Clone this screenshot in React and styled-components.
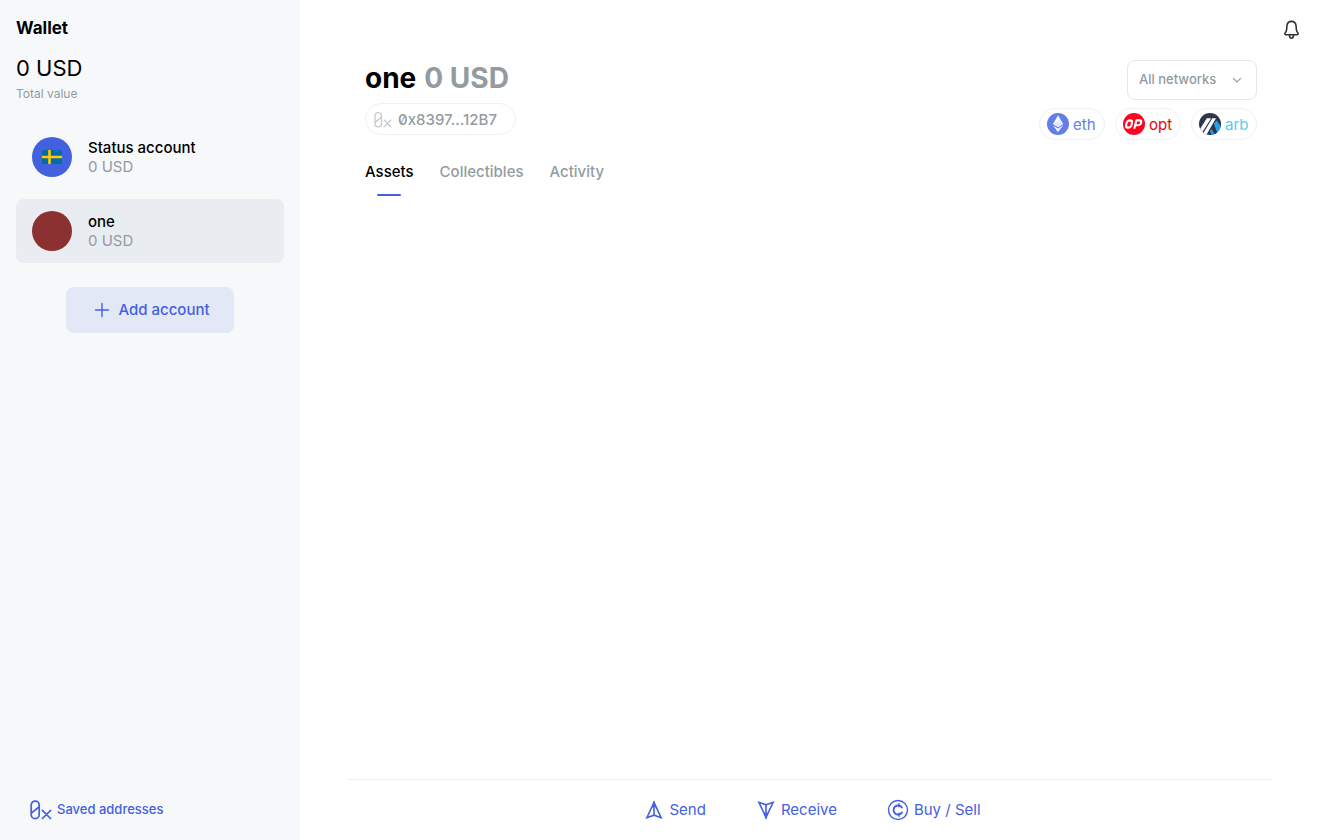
import React from 'react';
import styled, { createGlobalStyle } from 'styled-components';

const colors = {
  primary: '#4360df',
  muted: '#939ba1',
  line: '#eef2f5',
  sidebar: '#f6f8fa',
  selected: '#e9edf1',
};

const GlobalStyle = createGlobalStyle`
  * { box-sizing: border-box; }
  body { margin: 0; background: #fff; color: #000; font-family: Inter, sans-serif; font-size: 15px; line-height: 24px; }
  h1, h2, p, ul { margin: 0; padding: 0; }
  ul { list-style: none; }
  button, select { font: inherit; color: inherit; border: 0; background: none; padding: 0; cursor: pointer; }
  svg { display: block; flex: none; }
`;

const Page = styled.div`
  display: grid;
  grid-template-columns: 300px 1fr;
  min-height: 100vh;
`;

const Sidebar = styled.aside`
  display: flex;
  flex-direction: column;
  padding: 16px;
  background: ${colors.sidebar};
`;

const SidebarTitle = styled.h2`
  font-size: 17px;
  font-weight: 700;
  line-height: 24px;
`;

const Total = styled.p`
  margin-top: 12px;
  font-size: 22px;
  line-height: 32px;
`;

const TotalLabel = styled.p`
  color: ${colors.muted};
  font-size: 12px;
  line-height: 20px;
`;

const AccountList = styled.ul`
  display: flex;
  flex-direction: column;
  gap: 10px;
  margin-top: 21px;
`;

const AccountRow = styled.button`
  display: flex;
  align-items: center;
  gap: 16px;
  width: 100%;
  height: 64px;
  padding: 0 16px;
  border-radius: 8px;
  text-align: left;
  background: ${(p) => (p.$selected ? colors.selected : 'transparent')};
`;

const Avatar = styled.span`
  display: grid;
  place-items: center;
  width: 40px;
  height: 40px;
  border-radius: 50%;
  background: ${(p) => p.$color};
`;

const AccountText = styled.span`
  display: flex;
  flex-direction: column;
  line-height: 19px;
`;

const AccountName = styled.span`
  font-weight: 500;
`;

const AccountBalance = styled.span`
  color: ${colors.muted};
`;

const AddButton = styled.button`
  display: flex;
  align-items: center;
  align-self: center;
  gap: 8px;
  height: 46px;
  margin-top: 24px;
  padding: 0 24px 0 28px;
  border-radius: 8px;
  background: #e3e8f7;
  color: ${colors.primary};
  font-weight: 500;
`;

const SavedLink = styled.a`
  display: flex;
  align-items: center;
  gap: 5px;
  margin-top: auto;
  padding: 0 14px;
  color: ${colors.primary};
  font-size: 13px;
  font-weight: 500;
  line-height: 30px;
  text-decoration: none;
`;

const Main = styled.main`
  display: flex;
  flex-direction: column;
`;

const TopBar = styled.div`
  display: flex;
  justify-content: flex-end;
  height: 60px;
  padding: 18px 19px;
`;

const IconButton = styled.button`
  display: grid;
  place-items: center;
  width: 24px;
  height: 24px;
`;

const Header = styled.header`
  display: flex;
  justify-content: space-between;
  padding: 0 65px;
`;

const HeaderLeft = styled.div`
  display: flex;
  flex-direction: column;
  align-items: flex-start;
  gap: 7px;
`;

const HeaderRight = styled.div`
  display: flex;
  flex-direction: column;
  align-items: flex-end;
  gap: 8px;
`;

const Title = styled.h1`
  display: flex;
  gap: 8px;
  font-size: 28px;
  font-weight: 700;
  line-height: 36px;
`;

const TitleBalance = styled.span`
  color: ${colors.muted};
`;

const Pill = styled.button`
  display: flex;
  align-items: center;
  height: 32px;
  border: 1px solid ${colors.line};
  border-radius: 16px;
  line-height: normal;
`;

const AddressPill = styled(Pill)`
  gap: 6px;
  padding: 0 18px 0 8px;
  color: ${colors.muted};
  font-weight: 500;
  font-variant-numeric: slashed-zero;
`;

const NetworkList = styled.ul`
  display: flex;
  gap: 10px;
`;

const NetworkPill = styled(Pill)`
  gap: 4px;
  width: 66px;
  padding: 0 0 0 7px;
  color: ${(p) => p.$color};
`;

const SelectBox = styled.label`
  display: grid;
  grid-template-columns: 1fr 38px;
  align-items: center;
  width: 130px;
  height: 40px;
  border: 1px solid #e4e6e9;
  border-radius: 8px;
  color: ${colors.muted};

  svg { grid-area: 1 / 2; justify-self: center; pointer-events: none; }
`;

const Select = styled.select`
  grid-area: 1 / 1 / 2 / 3;
  height: 38px;
  padding: 0 32px 2px 11px;
  appearance: none;
  font-size: 13px;
  font-weight: 500;
`;

const Tabs = styled.nav`
  display: flex;
  gap: 26px;
  margin-top: 20px;
  padding: 0 65px;
`;

const Tab = styled.button`
  display: flex;
  flex-direction: column;
  align-items: center;
  gap: 10px;
  color: ${(p) => (p.$active ? '#000' : colors.muted)};
  font-weight: 500;

  &::after {
    content: '';
    width: 24px;
    height: 2px;
    border-radius: 1px;
    background: ${(p) => (p.$active ? colors.primary : 'transparent')};
  }
`;

const Footer = styled.footer`
  display: flex;
  justify-content: center;
  gap: 50px;
  height: 61px;
  margin: auto 50px 0 48px;
  padding-left: 5px;
  border-top: 1px solid #eceef0;
`;

const Action = styled.button`
  display: flex;
  align-items: center;
  gap: 5px;
  color: ${colors.primary};
`;

const Flag = () => (
  <svg width="20" height="14" viewBox="0 0 20 14">
    <rect width="20" height="14" rx="2" fill="#066aa7" />
    <path d="M7.5 0v14M0 7h20" stroke="#fecc00" strokeWidth="2.6" />
  </svg>
);

const Plus = () => (
  <svg width="16" height="16" viewBox="0 0 16 16" fill="none" stroke="currentColor" strokeWidth="1.4" strokeLinecap="round">
    <path d="M8 1.5v13M1.5 8h13" />
  </svg>
);

const HexIcon = ({ size, color }) => (
  <svg width={size} height={size} viewBox="0 -2 22 22" fill="none" stroke={color} strokeWidth="1.7" strokeLinecap="round">
    <rect x="1.2" y="1.2" width="8" height="17.4" rx="3.8" />
    <path d="M1.6 12.8 9 7M12.4 10.3l8.2 8.2M20.6 10.3l-8.2 8.2" />
  </svg>
);

const Bell = () => (
  <svg width="24" height="24" viewBox="0 0 24 24" fill="none" stroke="#303237" strokeWidth="1.6" strokeLinejoin="round">
    <path d="M12.5 3.4c-3 0-4.400 2.200-4.600 4.800l-.3 3.600c-.1 1.400-.5 2.100-1.300 3-.9 1-.6 1.900.6 1.900h11.200c1.200 0 1.500-.9.6-1.900-.8-.9-1.200-1.600-1.300-3l-.3-3.600c-.2-2.600-1.600-4.800-4.600-4.800Z" />
    <path d="M10.500 17c0 2 .8 3.200 2 3.200s2-1.200 2-3.200" />
  </svg>
);

const Chevron = () => (
  <svg width="10" height="10" viewBox="0 0 10 10" fill="none" stroke="#939ba1" strokeWidth="1.1" strokeLinecap="round" strokeLinejoin="round">
    <path d="m1.5 3.5 3.500 3.300 3.500-3.300" />
  </svg>
);

const EthIcon = () => (
  <svg width="22" height="22" viewBox="0 0 22 22">
    <circle cx="11" cy="11" r="11" fill="#627eea" />
    <path d="m11 2.600-5 8.500 5 3 5-3Z" fill="#fff" />
    <path d="m11 2.600 5 8.500-5 3Z" fill="#f0f3fe" />
    <path d="m11 8.700-5 2.400 5 3 5-3Z" fill="#dfe5fb" />
    <path d="m6 12.500 5 6.600 5-6.600-5 3Z" fill="#fff" />
    <path d="m11 15.500v3.600l5-6.600Z" fill="#dfe5fb" />
  </svg>
);

const OpIcon = () => (
  <svg width="22" height="22" viewBox="0 0 22 22">
    <circle cx="11" cy="11" r="11" fill="#ff0420" />
    <g transform="translate(2.600 0) skewX(-14)" fill="none" stroke="#fff" strokeWidth="2.100" strokeLinejoin="round">
      <rect x="3.500" y="7.400" width="5.400" height="7.200" rx="2.700" />
      <path d="M12.600 15.700V7.400h3a2.300 2.300 0 0 1 0 4.800h-3" />
    </g>
  </svg>
);

const ArbIcon = () => (
  <svg width="22" height="22" viewBox="0 0 22 22">
    <defs>
      <clipPath id="arb-disc"><circle cx="11" cy="11" r="11" /></clipPath>
    </defs>
    <g clipPath="url(#arb-disc)">
      <rect width="22" height="22" fill="#2d374b" />
      <path d="m14.800 10.600 3-3.200 5 7.600v8h-3.500Z" fill="#28a0f0" />
      <path d="m14.200 12.400 5 8.600-3 1-3.700-6.300Z" fill="#2d374b" />
      <path d="m12.300 15.800 3.900 6.700h-3l-2.300-4.200Z" fill="#28a0f0" />
      <path d="M7.800 5.200h4.300L2.200 21H-2Z" fill="#fff" />
      <path d="M13.300 5.200h3.700L7 22.500H2.900Z" fill="#fff" />
    </g>
  </svg>
);

const SendIcon = ({ flipped }) => (
  <svg width="20" height="22" viewBox="0 0 20 22" fill="none" stroke="currentColor" strokeWidth="1.600" strokeLinejoin="miter" strokeLinecap="round">
    <g transform={flipped ? 'rotate(180 10 11)' : undefined}>
      <path d="M10 3.500 2.900 18.700 10 16.200l7.100 2.500Z" />
      <path d="M10 3v13" />
      <path d="m10 2-2.300 7 2.300-1.500L12.300 9Z" fill="currentColor" stroke="none" />
    </g>
  </svg>
);

const CoinIcon = () => (
  <svg width="22" height="22" viewBox="0 0 22 22" fill="none" stroke="currentColor" strokeWidth="1.400" strokeLinecap="round">
    <circle cx="11" cy="11" r="9.500" />
    <path d="M14.900 8.600a4.500 4.500 0 1 0 0 4.800" strokeWidth="1.900" />
    <path d="M12 4.800v3M12 14.200v3" />
  </svg>
);

const accounts = [
  { name: 'Status account', balance: '0 USD', color: colors.primary, icon: <Flag /> },
  { name: 'one', balance: '0 USD', color: '#8b3131', selected: true },
];

const networks = [
  { name: 'eth', color: '#627eea', icon: <EthIcon /> },
  { name: 'opt', color: '#e90101', icon: <OpIcon /> },
  { name: 'arb', color: '#51d0f0', icon: <ArbIcon /> },
];

export default function App() {
  return (
    <>
      <GlobalStyle />
      <Page>
        <Sidebar>
          <SidebarTitle>Wallet</SidebarTitle>
          <Total>0 USD</Total>
          <TotalLabel>Total value</TotalLabel>
          <AccountList>
            {accounts.map((a) => (
              <li key={a.name}>
                <AccountRow $selected={a.selected}>
                  <Avatar $color={a.color}>{a.icon}</Avatar>
                  <AccountText>
                    <AccountName>{a.name}</AccountName>
                    <AccountBalance>{a.balance}</AccountBalance>
                  </AccountText>
                </AccountRow>
              </li>
            ))}
          </AccountList>
          <AddButton><Plus />Add account</AddButton>
          <SavedLink href="#saved">
            <HexIcon size={22} color={colors.primary} />
            Saved addresses
          </SavedLink>
        </Sidebar>
        <Main>
          <TopBar>
            <IconButton aria-label="Notifications"><Bell /></IconButton>
          </TopBar>
          <Header>
            <HeaderLeft>
              <Title>one <TitleBalance>0 USD</TitleBalance></Title>
              <AddressPill>
                <HexIcon size={18} color="#c9cdd0" />
                0x8397...12B7
              </AddressPill>
            </HeaderLeft>
            <HeaderRight>
              <SelectBox>
                <Select aria-label="Networks" defaultValue="all">
                  <option value="all">All networks</option>
                </Select>
                <Chevron />
              </SelectBox>
              <NetworkList>
                {networks.map((n) => (
                  <li key={n.name}>
                    <NetworkPill $color={n.color}>{n.icon}{n.name}</NetworkPill>
                  </li>
                ))}
              </NetworkList>
            </HeaderRight>
          </Header>
          <Tabs>
            <Tab $active>Assets</Tab>
            <Tab>Collectibles</Tab>
            <Tab>Activity</Tab>
          </Tabs>
          <Footer>
            <Action><SendIcon />Send</Action>
            <Action><SendIcon flipped />Receive</Action>
            <Action><CoinIcon />Buy / Sell</Action>
          </Footer>
        </Main>
      </Page>
    </>
  );
}
